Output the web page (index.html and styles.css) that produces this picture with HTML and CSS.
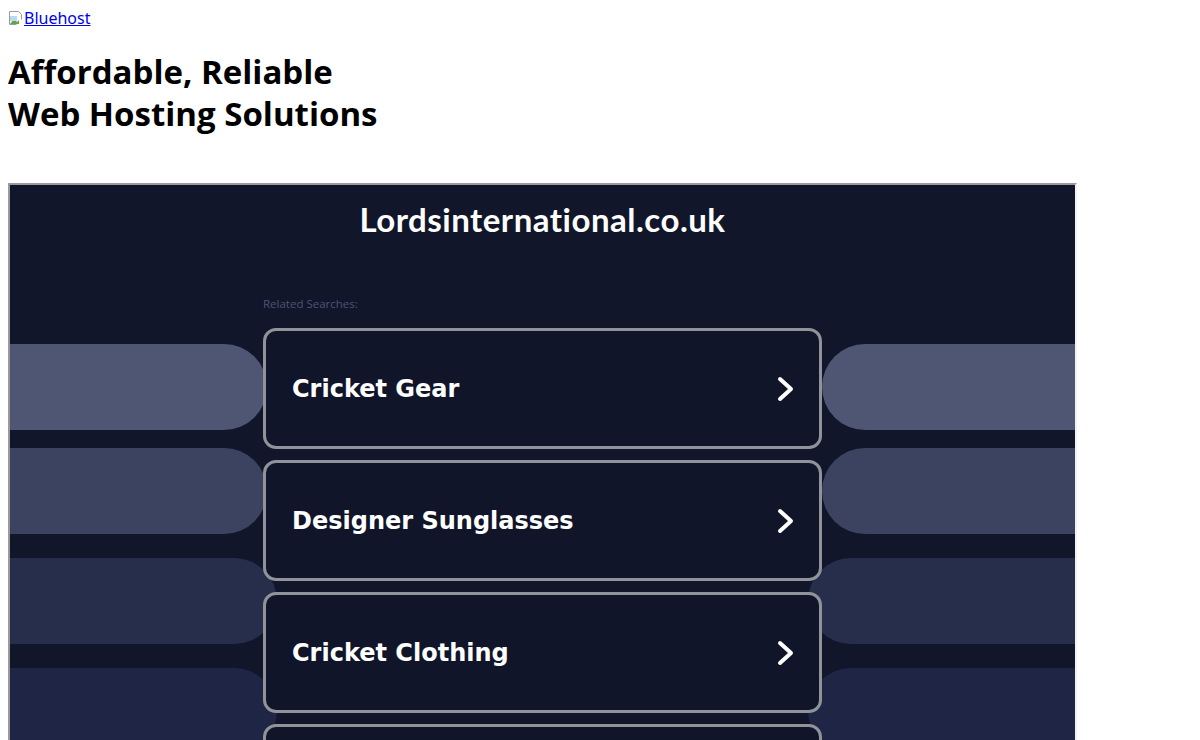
FILE: index.html
```html
<!DOCTYPE html>
<html>
<head>
<meta charset="utf-8">
<link rel="stylesheet" href="styles.css">
</head>
<body>
<div class="logo-line"><a href="#" class="logo-link"><svg class="broken" width="16" height="16" viewBox="0 0 16 16"><path d="M1.5 1.5h9l3 3v5" fill="#fff" stroke="#9a9a9a"/><path d="M1.5 1.5v13h7" fill="none" stroke="#9a9a9a"/><path d="M2 14l4-5 3 3 2-2v4z" fill="#5fa84a"/><path d="M2 6h7v5H2z" fill="#bcd7f0"/></svg>Bluehost</a></div>
<h1 class="headline">Affordable, Reliable<br>Web Hosting Solutions</h1>
<div class="frame">
  <div class="stripes">
    <div class="stripe-row s1"><span class="pill left"></span><span class="pill right"></span></div>
    <div class="stripe-row s2"><span class="pill left"></span><span class="pill right"></span></div>
    <div class="stripe-row s3"><span class="pill left wide"></span><span class="pill right wide"></span></div>
    <div class="stripe-row s4"><span class="pill left wide"></span><span class="pill right wide"></span></div>
  </div>
  <div class="frame-content">
    <div class="domain">Lordsinternational.co.uk</div>
    <div class="searches">
      <div class="related">Related Searches:</div>
      <a href="#" class="search-btn"><span>Cricket Gear</span><svg class="chev" width="20" height="26" viewBox="0 0 20 26"><path d="M4 3l11 10-11 10" fill="none" stroke="#fff" stroke-width="4" stroke-linecap="round" stroke-linejoin="round"/></svg></a>
      <a href="#" class="search-btn"><span>Designer Sunglasses</span><svg class="chev" width="20" height="26" viewBox="0 0 20 26"><path d="M4 3l11 10-11 10" fill="none" stroke="#fff" stroke-width="4" stroke-linecap="round" stroke-linejoin="round"/></svg></a>
      <a href="#" class="search-btn"><span>Cricket Clothing</span><svg class="chev" width="20" height="26" viewBox="0 0 20 26"><path d="M4 3l11 10-11 10" fill="none" stroke="#fff" stroke-width="4" stroke-linecap="round" stroke-linejoin="round"/></svg></a>
      <a href="#" class="search-btn"></a>
    </div>
  </div>
</div>
</body>
</html>
```
FILE: styles.css
```css
html, body {
  margin: 0;
  padding: 0;
  background: #fff;
}
body {
  margin: 8px;
  font-family: "Open Sans", "Noto Sans", sans-serif;
  color: #000;
  overflow: hidden;
}
.logo-line {
  height: 21px;
  line-height: 21px;
  font-size: 16px;
}
.logo-link {
  color: #0000ee;
  text-decoration: underline;
  font-family: "Noto Sans", sans-serif;
  font-size: 16px;
}
.broken {
  vertical-align: -2px;
}
.headline {
  margin: 22px 0 48px 0;
  font-size: 33px;
  line-height: 42px;
  font-weight: 700;
  letter-spacing: 0;
}
.frame {
  position: relative;
  width: 1065px;
  height: 560px;
  border-style: solid;
  border-width: 2px;
  border-color: #9a9a9a #f2f2f2 #f2f2f2 #9a9a9a;
  background: #11162a;
  overflow: hidden;
}
.stripes {
  position: absolute;
  left: 0;
  right: 0;
  top: 159px;
  display: flex;
  flex-direction: column;
}
.stripe-row {
  height: 86px;
  display: flex;
  justify-content: space-between;
}
.s2 { margin-top: 18px; }
.s3 { margin-top: 24px; }
.s4 { margin-top: 24px; }
.pill {
  display: block;
  width: 300px;
  height: 86px;
}
.pill.left {
  margin-left: -43px;
  border-radius: 0 43px 43px 0;
}
.pill.right {
  width: 296px;
  margin-right: -43px;
  border-radius: 43px 0 0 43px;
}
.pill.left.wide { width: 310px; }
.pill.right.wide { width: 310px; }
.s1 .pill { background: #4e5673; }
.s2 .pill { background: #3b4361; }
.s3 .pill { background: #272e4c; }
.s4 .pill { background: #1e2545; }
.frame-content {
  position: relative;
  display: flex;
  flex-direction: column;
  align-items: center;
}
.domain {
  margin-top: 16px;
  font-family: "Lato", sans-serif;
  font-weight: 700;
  font-size: 33px;
  line-height: 36px;
  color: #fff;
  letter-spacing: 0.5px;
}
.searches {
  width: 559px;
  margin-top: 59px;
  display: flex;
  flex-direction: column;
  gap: 11px;
}
.related {
  font-family: "Open Sans", sans-serif;
  font-size: 11.5px;
  line-height: 16px;
  color: #4d5575;
  margin-bottom: 5px;
}
.search-btn {
  box-sizing: border-box;
  height: 121px;
  flex-shrink: 0;
  display: flex;
  align-items: center;
  justify-content: space-between;
  padding: 0 23px 0 26px;
  border: 3px solid #909399;
  border-radius: 13px;
  background: #10152a;
  color: #fff;
  text-decoration: none;
  font-family: "DejaVu Sans", Verdana, sans-serif;
  font-weight: 700;
  font-size: 24px;
}
.chev {
  display: block;
}
```
